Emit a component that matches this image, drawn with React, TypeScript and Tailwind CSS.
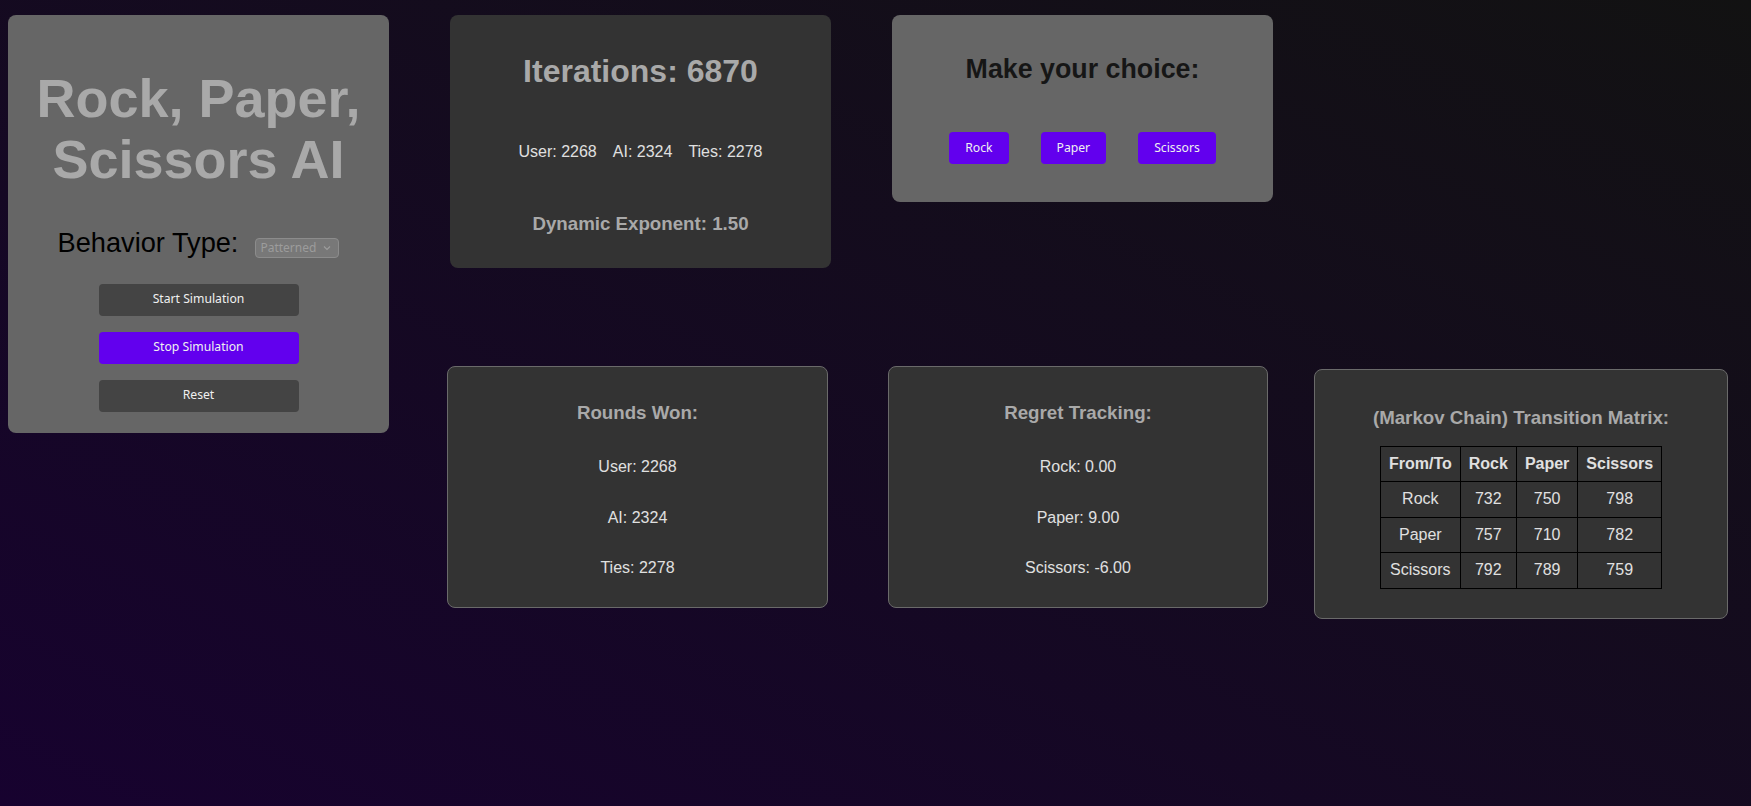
import React from "react";

function ActionButton({ label, purple }: { label: string; purple?: boolean }) {
  return (
    <button
      className={
        "w-[200px] h-[32px] rounded-[4px] text-[12.2px] text-[#f0f0f0] font-['Noto_Sans',sans-serif] " +
        (purple ? "bg-[#6200ee]" : "bg-[#444444]")
      }
    >
      {label}
    </button>
  );
}

function ChoiceButton({ label }: { label: string }) {
  return (
    <button className="h-[32px] px-[16px] rounded-[4px] bg-[#6200ee] text-[12.2px] text-[#f0f0f0] font-['Noto_Sans',sans-serif]">
      {label}
    </button>
  );
}

const matrix = [
  ["Rock", "732", "750", "798"],
  ["Paper", "757", "710", "782"],
  ["Scissors", "792", "789", "759"],
];

export default function App() {
  return (
    <div className="w-full min-h-[806px] bg-[linear-gradient(to_top_right,#17022f,#121212)] font-['Liberation_Sans',Arial,sans-serif] flex items-start">
      {/* Left control card */}
      <div className="ml-[8px] mt-[15px] w-[381px] h-[418px] shrink-0 rounded-[8px] bg-[#666666] flex flex-col items-center">
        <h1 className="mt-[53px] text-center text-[54px] leading-[61px] font-bold text-[#a9a9a9]">
          Rock, Paper,
          <br />
          Scissors AI
        </h1>
        <div className="mt-[38px] flex items-baseline gap-[17px]">
          <span className="text-[27.2px] leading-[30.6px] text-black">Behavior Type:</span>
          <div className="w-[84px] h-[20px] rounded-[4px] bg-[#787878] border border-[#8c8c8c] flex items-center justify-between pl-[4px] pr-[7px] text-[12px] text-[#9c9c9c] font-['Noto_Sans',sans-serif] leading-[18px]">
            <span>Patterned</span>
            <svg width="8" height="6" viewBox="0 0 8 6" fill="none">
              <path d="M1 1.5 L4 4.5 L7 1.5" stroke="#9c9c9c" strokeWidth="1.2" />
            </svg>
          </div>
        </div>
        <div className="mt-[25px] flex flex-col gap-[16px]">
          <ActionButton label="Start Simulation" />
          <ActionButton label="Stop Simulation" purple />
          <ActionButton label="Reset" />
        </div>
      </div>

      <div className="flex flex-col">
        {/* Row 1 */}
        <div className="mt-[15px] flex items-start">
          <div className="ml-[61px] w-[381px] h-[253px] rounded-[8px] bg-[#333333] flex flex-col items-center">
            <h1 className="mt-[37.5px] text-[32px] leading-[36.8px] font-bold text-[#a9a9a9]">Iterations: 6870</h1>
            <div className="mt-[54px] flex gap-[16px] text-[16px] leading-[18.4px] text-[#e0e0e0]">
              <span>User: 2268</span>
              <span>AI: 2324</span>
              <span>Ties: 2278</span>
            </div>
            <h3 className="mt-[51px] text-[18.72px] leading-[21.5px] font-bold text-[#a9a9a9]">Dynamic Exponent: 1.50</h3>
          </div>

          <div className="ml-[61px] w-[381px] h-[187px] rounded-[8px] bg-[#666666] flex flex-col items-center">
            <h2 className="mt-[39px] text-[26.8px] leading-[30.8px] font-bold text-[#161616]">Make your choice:</h2>
            <div className="mt-[47px] flex gap-[32px]">
              <ChoiceButton label="Rock" />
              <ChoiceButton label="Paper" />
              <ChoiceButton label="Scissors" />
            </div>
          </div>
        </div>

        {/* Row 2 */}
        <div className="mt-[98px] flex items-start">
          <div className="ml-[58px] w-[381px] h-[242px] rounded-[8px] bg-[#333333] border border-[#6a6a6a] flex flex-col items-center">
            <h3 className="mt-[35px] text-[18.72px] leading-[21.5px] font-bold text-[#a9a9a9]">Rounds Won:</h3>
            <div className="mt-[34.5px] flex flex-col items-center gap-[32.3px] text-[16px] leading-[18.4px] text-[#e0e0e0]">
              <p>User: 2268</p>
              <p>AI: 2324</p>
              <p>Ties: 2278</p>
            </div>
          </div>

          <div className="ml-[60px] w-[380px] h-[242px] rounded-[8px] bg-[#333333] border border-[#6a6a6a] flex flex-col items-center">
            <h3 className="mt-[35px] text-[18.72px] leading-[21.5px] font-bold text-[#a9a9a9]">Regret Tracking:</h3>
            <div className="mt-[34.5px] flex flex-col items-center gap-[32.3px] text-[16px] leading-[18.4px] text-[#e0e0e0]">
              <p>Rock: 0.00</p>
              <p>Paper: 9.00</p>
              <p>Scissors: -6.00</p>
            </div>
          </div>

          <div className="ml-[46px] mt-[3px] w-[414px] h-[250px] rounded-[8px] bg-[#333333] border border-[#6a6a6a] flex flex-col items-center">
            <h3 className="mt-[36.5px] text-[18.72px] leading-[21.5px] font-bold text-[#a9a9a9]">(Markov Chain) Transition Matrix:</h3>
            <table className="mt-[18px] border-collapse text-[16px] leading-[18.4px] text-[#e0e0e0]">
              <thead>
                <tr>
                  {["From/To", "Rock", "Paper", "Scissors"].map((h) => (
                    <th key={h} className="border border-black px-[8px] py-[8px] font-bold">
                      {h}
                    </th>
                  ))}
                </tr>
              </thead>
              <tbody>
                {matrix.map((row) => (
                  <tr key={row[0]}>
                    {row.map((c, i) => (
                      <td key={i} className="border border-black px-[8px] py-[8px] text-center">
                        {c}
                      </td>
                    ))}
                  </tr>
                ))}
              </tbody>
            </table>
          </div>
        </div>
      </div>
    </div>
  );
}
